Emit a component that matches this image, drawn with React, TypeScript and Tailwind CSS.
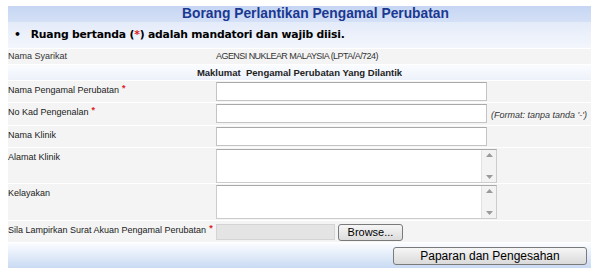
import React from "react";

const Req = () => (
  <sup className="ml-[3px] text-[9px] font-bold text-[#e02020] relative top-[-2px]">*</sup>
);

function Row({ label, req, h, children }: { label: string; req?: boolean; h: string; children?: React.ReactNode }) {
  return (
    <div className={`flex bg-[#f4f4f4] ${h}`}>
      <div className="w-[208px] shrink-0 pt-[3px] text-[9px] leading-[12px] text-[#222] whitespace-nowrap">
        {label}
        {req && <Req />}
      </div>
      <div className="flex-1 flex items-start pt-px">{children}</div>
    </div>
  );
}

function TextBox() {
  return <input className="w-[271px] h-[19px] bg-white border border-[#c4c4c4] border-t-[#a9a9a9] outline-none" />;
}

function Area() {
  return (
    <div className="flex w-[281px] h-[34px] bg-white border border-[#cccccc] border-t-[#a9a9a9]">
      <textarea className="flex-1 resize-none outline-none" />
      <div className="w-[15px] flex flex-col justify-between items-center bg-[#f3f3f3] border-l border-[#e2e2e2] py-[3px]">
        <svg width="7" height="4" viewBox="0 0 7 4"><path d="M0 4 L3.5 0 L7 4Z" fill="#9a9a9a" /></svg>
        <svg width="7" height="4" viewBox="0 0 7 4"><path d="M0 0 L3.5 4 L7 0Z" fill="#9a9a9a" /></svg>
      </div>
    </div>
  );
}

export default function App() {
  return (
    <div className="w-[600px] h-[278px] bg-white pt-[6px] pl-[8px] font-['Liberation_Sans',Arial,sans-serif]">
      <div className="w-[583px] flex flex-col gap-px">
        <div>
          <div className="h-[16px] pl-[32px] bg-gradient-to-b from-[#c6d6f3] to-[#d4e0f6] text-center text-[13.8px] leading-[16px] font-bold text-[#1b3891]">
            Borang Perlantikan Pengamal Perubatan
          </div>
          <div className="h-[26px] bg-gradient-to-b from-[#e4ebf9] to-[#f3f6fc] flex items-center pl-[6px] text-[10.8px] font-bold text-black font-['DejaVu_Sans',sans-serif] tracking-[-0.2px]">
            <span className="mr-[10px]">•</span>
            <span>
              Ruang bertanda (<span className="text-[#e02020]">*</span>) adalah mandatori dan wajib diisi.
            </span>
          </div>
        </div>
        <div className="flex bg-[#f4f4f4] h-[15px] text-[9px] leading-[15px] text-[#333]">
          <div className="w-[208px]">Nama Syarikat</div>
          <div className="text-[9px] tracking-[-0.55px]">AGENSI NUKLEAR MALAYSIA (LPTA/A/724)</div>
        </div>
        <div className="h-[15px] bg-gradient-to-b from-[#fafcff] to-[#edf2fa] text-center text-[9.5px] leading-[15px] font-bold text-[#222]">
          Maklumat&nbsp; Pengamal Perubatan Yang Dilantik
        </div>
        <Row label="Nama Pengamal Perubatan" req h="h-[21px]">
          <TextBox />
        </Row>
        <Row label="No Kad Pengenalan" req h="h-[22px]">
          <TextBox />
          <span className="ml-[4px] mt-[5px] text-[9px] leading-[12px] italic text-[#333] whitespace-nowrap">(Format: tanpa tanda '-')</span>
        </Row>
        <Row label="Nama Klinik" h="h-[21px]">
          <TextBox />
        </Row>
        <Row label="Alamat Klinik" h="h-[35px]">
          <Area />
        </Row>
        <Row label="Kelayakan" h="h-[36px]">
          <Area />
        </Row>
        <Row label="Sila Lampirkan Surat Akuan Pengamal Perubatan" req h="h-[21px]">
          <div className="w-[119px] h-[16px] mt-[2px] bg-[#e4e4e4] border border-[#d4d4d4]" />
          <button className="ml-[3px] mt-[2px] w-[65px] h-[17px] rounded-[3px] border border-[#7a7a7a] bg-gradient-to-b from-[#f6f6f6] to-[#dcdcdc] text-[11px] leading-[15px] text-black">
            Browse...
          </button>
        </Row>
        <div className="h-[25px] bg-gradient-to-b from-[#fbfdff] to-[#c9daf3] flex justify-end items-start pt-[4px] pr-[4px]">
          <button className="w-[194px] h-[18px] rounded-[3px] border border-[#7a7a7a] bg-gradient-to-b from-[#f6f6f6] to-[#dadada] text-[12px] leading-[16px] text-black">
            Paparan dan Pengesahan
          </button>
        </div>
      </div>
    </div>
  );
}
